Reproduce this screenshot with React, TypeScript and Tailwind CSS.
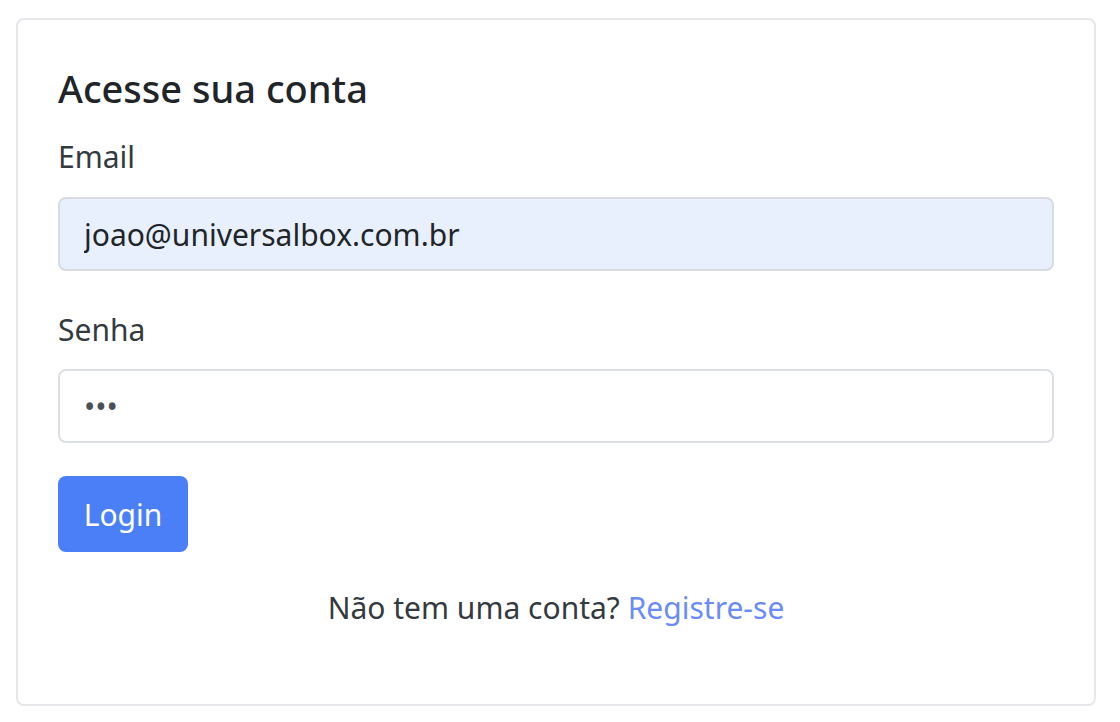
export default function App() {
  return (
    <div className="min-h-screen bg-white pt-[18px] pl-[16px] pr-[24px] font-['Noto_Sans',sans-serif] text-[#212529]">
      <div className="h-[688px] rounded-[8px] border-2 border-[#e5e7ea] px-[40px] pt-[46px]">
        <h5 className="text-[38px] leading-[44px] font-medium">Acesse sua conta</h5>
        <form className="mt-[29px]" onSubmit={(e) => e.preventDefault()}>
          <label className="block text-[30px] leading-[36px] text-[#343a40]">Email</label>
          <input
            type="email"
            defaultValue="joao@universalbox.com.br"
            className="mt-[22px] block h-[74px] w-full rounded-[8px] border-2 border-[#d8dce0] bg-[#e8f0fe] px-[24px] text-[30px] text-[#212529] outline-none"
          />
          <label className="mt-[41px] block text-[30px] leading-[36px] text-[#343a40]">Senha</label>
          <input
            type="password"
            defaultValue="123"
            className="mt-[21px] block h-[74px] w-full rounded-[8px] border-2 border-[#dcdfe3] bg-white px-[24px] text-[30px] text-[#495057] outline-none"
          />
          <button
            type="submit"
            className="mt-[33px] block h-[76px] w-[130px] rounded-[8px] bg-[#4a7ff7] text-[30px] text-white"
          >
            Login
          </button>
        </form>
        <p className="mt-[36px] text-center text-[30px] leading-[40px] text-[#343a40]">
          Não tem uma conta? <a href="#" className="text-[#6b8cf8]">Registre-se</a>
        </p>
      </div>
    </div>
  );
}
